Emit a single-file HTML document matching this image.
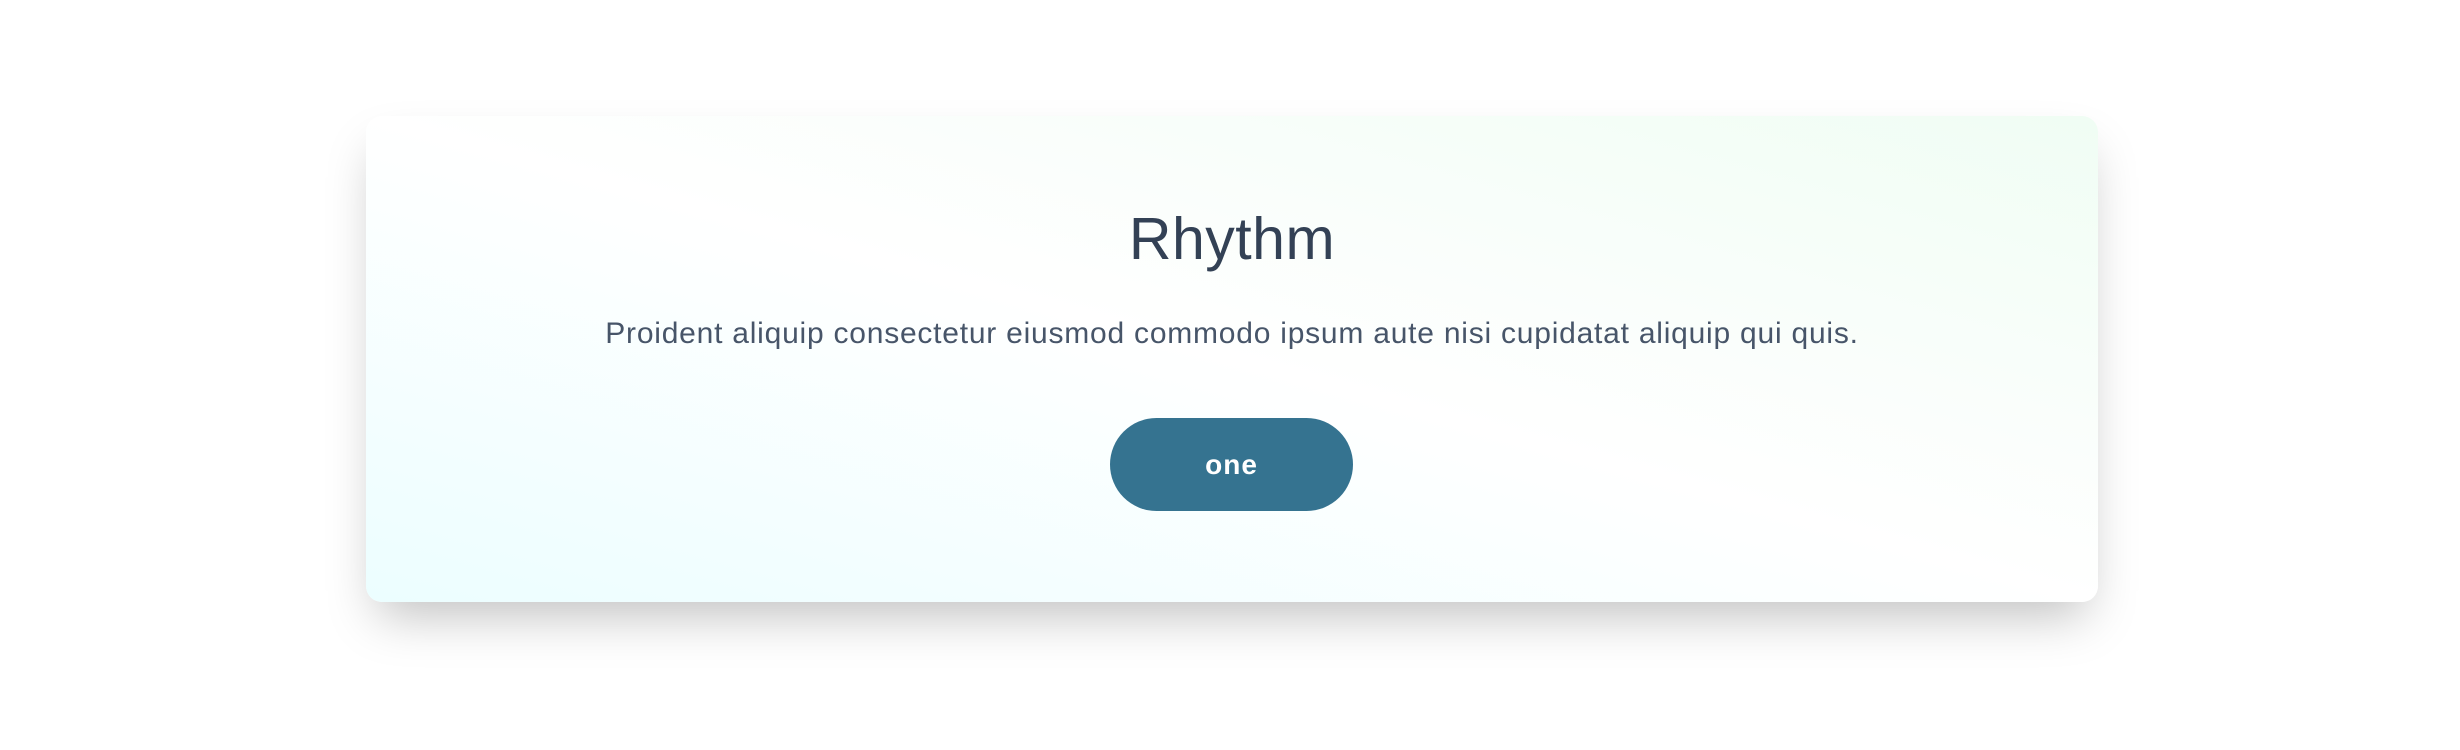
<!DOCTYPE html>
<html><head><style>
html,body{margin:0;padding:0;background:#fff;width:2460px;height:750px;overflow:hidden;font-family:"Liberation Sans",sans-serif;}
.card{position:absolute;left:366px;top:116px;width:1732px;height:486px;border-radius:16px;
background:linear-gradient(to top right,#ecfeff 0%,#ffffff 50%,#f0fdf4 100%);
box-shadow:0 25px 50px -12px rgba(0,0,0,0.25);}
h1{position:absolute;left:0;right:0;margin:0;text-align:center;font-weight:400;font-size:59px;line-height:70px;color:#334155;letter-spacing:0.5px;}
.card h1{top:88px}
p{position:absolute;left:0;right:0;top:198px;margin:0;text-align:center;font-size:30px;line-height:40px;color:#475569;letter-spacing:0.77px;}
.btn{position:absolute;left:744px;top:302px;width:243px;height:93px;border-radius:47px;background:#357390;color:#fff;font-weight:700;font-size:28px;line-height:93px;text-align:center;letter-spacing:1px;}
</style></head><body>
<div class="card">
<h1>Rhythm</h1>
<p>Proident aliquip consectetur eiusmod commodo ipsum aute nisi cupidatat aliquip qui quis.</p>
<div class="btn">one</div>
</div>
</body></html>
